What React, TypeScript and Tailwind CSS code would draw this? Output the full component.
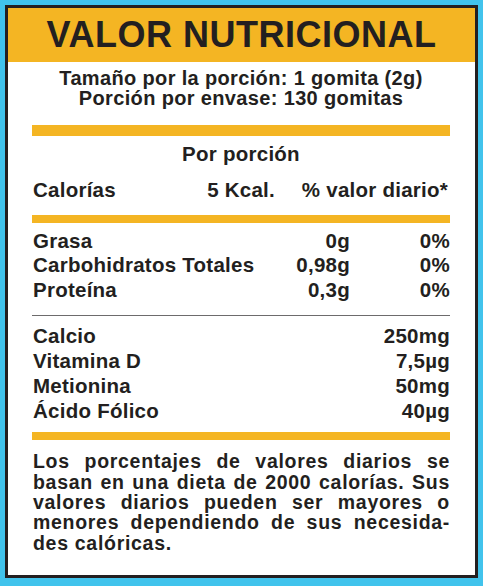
const nutrients = [
  { name: "Grasa", amount: "0g", daily: "0%" },
  { name: "Carbohidratos Totales", amount: "0,98g", daily: "0%" },
  { name: "Proteína", amount: "0,3g", daily: "0%" },
];

const extras = [
  { name: "Calcio", amount: "250mg" },
  { name: "Vitamina D", amount: "7,5µg" },
  { name: "Metionina", amount: "50mg" },
  { name: "Ácido Fólico", amount: "40µg" },
];

const footnote = [
  "Los porcentajes de valores diarios se",
  "basan en una dieta de 2000 calorías. Sus",
  "valores diarios pueden ser mayores o",
  "menores dependiendo de sus necesida-",
];

export default function App() {
  return (
    <div
      className="w-[483px] h-[586px] bg-[#41c3ec] pt-[5px] pl-[5px] pr-[5px] pb-[8px] text-[#231f20] font-bold"
      style={{ fontFamily: "'Liberation Sans', Arial, sans-serif" }}
    >
      <div className="h-full border-[3px] border-[#231f20] bg-white flex flex-col">
        {/* Header */}
        <div className="h-[54px] bg-[#f4b523] flex items-center justify-center text-[36px] leading-[54px] tracking-[0.5px]">
          VALOR NUTRICIONAL
        </div>

        <div className="pl-6 pr-[25px] flex flex-col tracking-[0.25px]">
          {/* Serving */}
          <div className="mt-[6.4px] text-center text-[20px] leading-[20px] tracking-[0.35px]">
            <div>Tamaño por la porción: 1 gomita (2g)</div>
            <div>Porción por envase: 130 gomitas</div>
          </div>

          <div className="mt-[16.6px] h-[11px] bg-[#f4b523]" />

          <div className="mt-[5.9px] text-center text-[20.5px] leading-[24px]">Por porción</div>

          <div className="mt-[11.7px] flex text-[20.5px] leading-[24px] pl-px">
            <span>Calorías</span>
            <span className="ml-auto">5 Kcal.</span>
            <span className="w-[175px] text-right pr-[2px]">% valor diario*</span>
          </div>

          <div className="mt-[13.4px] h-[8px] bg-[#f4b523]" />

          {/* Main nutrients */}
          <div className="mt-[5.6px] flex flex-col text-[20.5px] leading-[24.5px] pl-px">
            {nutrients.map((n) => (
              <div key={n.name} className="grid grid-cols-[1fr_100px]">
                <div className="flex">
                  <span>{n.name}</span>
                  <span className="ml-auto">{n.amount}</span>
                </div>
                <span className="text-right">{n.daily}</span>
              </div>
            ))}
          </div>

          <div className="mt-[13px] h-px bg-[#6d6b6c]" />

          {/* Vitamins & minerals */}
          <div className="mt-[7.1px] flex flex-col text-[20.5px] leading-[25px] pl-px">
            {extras.map((e) => (
              <div key={e.name} className="flex">
                <span>{e.name}</span>
                <span className="ml-auto">{e.amount}</span>
              </div>
            ))}
          </div>

          <div className="mt-[9px] h-[8px] bg-[#f4b523]" />

          {/* Footnote */}
          <div className="mt-[11px] text-[19.5px] leading-[20.4px] tracking-[0.7px] pl-px">
            {footnote.map((line) => (
              <div key={line} className="text-justify [text-align-last:justify]">
                {line}
              </div>
            ))}
            <div>des calóricas.</div>
          </div>
        </div>
      </div>
    </div>
  );
}
